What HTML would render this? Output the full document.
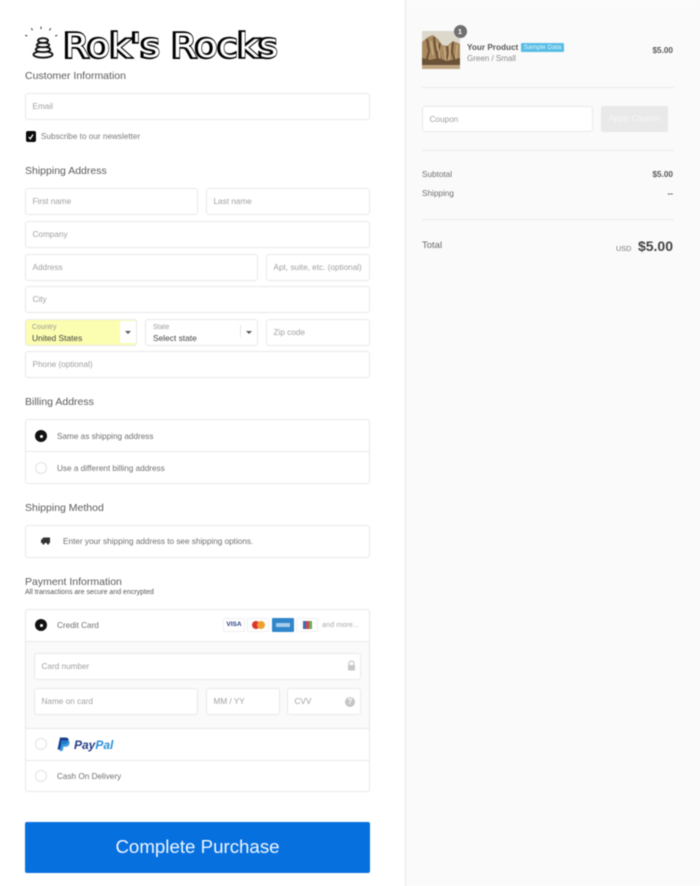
<!DOCTYPE html>
<html><head><meta charset="utf-8"><title>Checkout</title>
<style>
html,body{margin:0;padding:0;background:#fff}
#p{position:relative;width:700px;height:886px;overflow:hidden;background:#fff;font-family:"Liberation Sans",sans-serif;color:#545454;filter:blur(.5px)}
#p div{position:absolute;box-sizing:border-box}
.r{position:absolute;left:405px;top:0;width:295px;height:886px;background:#fafafa;border-left:1px solid #e6e6e6}
.i{background:#fff;border:1px solid #e9e9e9;border-radius:3px;font-size:8.2px;color:#a0a0a0;padding:0 0 1px 6.500px;display:flex;align-items:center;white-space:nowrap}
.h{font-size:10.500px;color:#5c5c5c;line-height:13px;white-space:nowrap}
.t{font-size:8.2px;line-height:11px;white-space:nowrap;color:#707070}
.box{background:#fff;border:1px solid #e8e8e8;border-radius:3px}
.ln{height:1px;background:#ebebeb}
.rad{width:12px;height:12px;border-radius:50%;border:1px solid #e2e2e2;background:#fff}
.on{background:#111;border:none}
.on:after{content:"";position:absolute;left:4.5px;top:4.5px;width:3px;height:3px;border-radius:50%;background:#fff}
.cd{width:22px;height:14px;background:#fff;border:1px solid #f0f0f0;border-radius:2px}
</style></head><body><div id="p">

<svg style="position:absolute;left:20px;top:20px" width="265" height="45" viewBox="0 0 265 45">
<g stroke="#333" stroke-width="1" fill="none" stroke-linecap="round">
<path d="M5.500 15.500l1.500.4M11.500 8.500l.8 1.400M21 7v1.800M30.500 8.500l-.8 1.500M37 15.500l-1.500.4"/>
</g>
<g fill="#fff" stroke="#111" stroke-width="1.900">
<ellipse cx="23" cy="34.500" rx="9.500" ry="3.200"/>
<ellipse cx="23" cy="29.500" rx="7.200" ry="2.600"/>
<ellipse cx="23" cy="25" rx="6.200" ry="2.300"/>
<ellipse cx="23" cy="20.500" rx="5" ry="2.300"/>
</g>
<text x="44" y="37" font-family="'DejaVu Sans',sans-serif" font-size="33" textLength="214" lengthAdjust="spacingAndGlyphs" fill="#000" stroke="#000" stroke-width="3.400" transform="translate(-.8 0)">Rok's Rocks</text>
<text x="44" y="37" font-family="'DejaVu Sans',sans-serif" font-size="33" textLength="214" lengthAdjust="spacingAndGlyphs" fill="#fff" transform="translate(.4 0)">Rok's Rocks</text>
</svg>

<div class="h" style="left:25px;top:70px">Customer Information</div>
<div class="i" style="left:25px;top:93px;width:345px;height:27px">Email</div>
<div style="left:26px;top:131px;width:10px;height:11px;background:#0a0a0a;border-radius:2px"></div>
<svg style="position:absolute;left:26px;top:131px" width="10" height="11"><path d="M2.800 6l1.500 1.800L7 3.500" stroke="#fff" stroke-width="1.200" fill="none"/></svg>
<div class="t" style="left:41px;top:131px;color:#7c7c7c">Subscribe to our newsletter</div>

<div class="h" style="left:25px;top:165px">Shipping Address</div>
<div class="i" style="left:25px;top:188px;width:173px;height:27px">First name</div>
<div class="i" style="left:206px;top:188px;width:164px;height:27px">Last name</div>
<div class="i" style="left:25px;top:221px;width:345px;height:27px">Company</div>
<div class="i" style="left:25px;top:254px;width:233px;height:27px">Address</div>
<div class="i" style="left:266px;top:254px;width:104px;height:27px">Apt, suite, etc. (optional)</div>
<div class="i" style="left:25px;top:286px;width:345px;height:27px">City</div>

<div class="i" style="left:25px;top:319px;width:112px;height:27px;background:#fbfdb0"></div>
<div style="left:120px;top:321px;width:16px;height:22px;background:#fff"></div>
<div style="left:125px;top:331px;width:0;height:0;border:3px solid transparent;border-top:3px solid #555"></div>
<div style="left:32px;top:323px;font-size:7px;line-height:10px;color:#999">Country</div>
<div style="left:32px;top:333px;font-size:8.400px;line-height:11px;color:#444;white-space:nowrap">United States</div>

<div class="i" style="left:145px;top:319px;width:113px;height:27px"></div>
<div style="left:240px;top:325px;width:1px;height:12px;background:#e6e6e6"></div>
<div style="left:246px;top:331px;width:0;height:0;border:3px solid transparent;border-top:3px solid #555"></div>
<div style="left:153px;top:323px;font-size:7px;line-height:10px;color:#999">State</div>
<div style="left:153px;top:333px;font-size:8.400px;line-height:11px;color:#444;white-space:nowrap">Select state</div>

<div class="i" style="left:266px;top:319px;width:104px;height:27px">Zip code</div>
<div class="i" style="left:25px;top:351px;width:345px;height:27px">Phone (optional)</div>

<div class="h" style="left:25px;top:396px">Billing Address</div>
<div class="box" style="left:25px;top:419px;width:345px;height:65px"></div>
<div class="ln" style="left:26px;top:451px;width:343px"></div>
<div class="rad on" style="left:35px;top:430px"></div>
<div class="t" style="left:57px;top:431px">Same as shipping address</div>
<div class="rad" style="left:35px;top:462px"></div>
<div class="t" style="left:57px;top:463px">Use a different billing address</div>

<div class="h" style="left:25px;top:502px">Shipping Method</div>
<div class="box" style="left:25px;top:525px;width:345px;height:33px"></div>
<svg style="position:absolute;left:41px;top:537px" width="9" height="8"><path d="M2.500 0.500H9V6H0V3z" fill="#333"/><circle cx="2.500" cy="6.500" r="1.100" fill="#333"/><circle cx="7" cy="6.500" r="1.100" fill="#333"/></svg>
<div class="t" style="left:63px;top:536px">Enter your shipping address to see shipping options.</div>

<div class="h" style="left:25px;top:576px">Payment Information</div>
<div style="left:25px;top:588px;font-size:7px;line-height:10px;color:#555;white-space:nowrap">All transactions are secure and encrypted</div>

<div class="box" style="left:25px;top:609px;width:345px;height:183px"></div>
<div style="left:26px;top:641px;width:343px;height:88px;background:#fafafa;border-top:1px solid #e9e9e9;border-bottom:1px solid #e9e9e9"></div>
<div class="ln" style="left:26px;top:760px;width:343px"></div>
<div class="rad on" style="left:35px;top:619px"></div>
<div class="t" style="left:57px;top:620px">Credit Card</div>

<div class="cd" style="left:223px;top:618px"></div>
<div style="left:223px;top:620px;width:22px;text-align:center;font-size:6.500px;line-height:10px;font-weight:bold;color:#2a3f80">VISA</div>
<div class="cd" style="left:247px;top:618px"></div>
<div style="left:252px;top:621px;width:8px;height:8px;border-radius:50%;background:#d9372c"></div>
<div style="left:257px;top:621px;width:8px;height:8px;border-radius:50%;background:#f0a030"></div>
<div style="left:272px;top:618px;width:22px;height:14px;background:#2f86cb;border-radius:1px"></div>
<div style="left:276px;top:623px;width:14px;height:4px;background:#a5cdea"></div>
<div class="cd" style="left:296px;top:618px"></div>
<div style="left:303px;top:621px;width:3px;height:8px;background:#3a6fb5"></div>
<div style="left:306px;top:621px;width:3px;height:8px;background:#d8434e"></div>
<div style="left:309px;top:621px;width:3px;height:8px;background:#66ad5b"></div>
<div style="left:322px;top:619px;font-size:7.300px;line-height:11px;color:#aaa;white-space:nowrap">and more...</div>

<div class="i" style="left:34px;top:653px;width:327px;height:27px">Card number</div>
<svg style="position:absolute;left:347px;top:660px" width="9" height="11"><path d="M2 5V3.500a2.500 2.500 0 015 0V5" fill="none" stroke="#c8c8c8" stroke-width="1.200"/><rect x="1" y="5" width="7" height="5.500" fill="#c8c8c8" rx=".5"/></svg>
<div class="i" style="left:34px;top:688px;width:164px;height:27px">Name on card</div>
<div class="i" style="left:206px;top:688px;width:74px;height:27px">MM / YY</div>
<div class="i" style="left:287px;top:688px;width:74px;height:27px">CVV</div>
<div style="left:345px;top:697px;width:10px;height:10px;border-radius:50%;background:#c4c4c4;color:#fff;font-size:8px;line-height:10px;font-weight:bold;text-align:center">?</div>

<div class="rad" style="left:35px;top:738px"></div>
<svg style="position:absolute;left:57px;top:737px" width="13" height="15"><path d="M3 0.500h5.500c2.500 0 3.500 1.500 3 3.500-.6 2.500-2.500 3.500-5 3.500H5L4 12.500H0.500z" fill="#1a3f8f"/><path d="M4.500 3.500h5.500c2.200 0 3 1.300 2.500 3.200-.6 2.300-2.300 3-4.500 3H6.500L5.700 14H2.500z" fill="#1f8bd6" opacity=".85"/></svg>
<div style="left:74px;top:738px;font-size:12px;line-height:14px;font-weight:bold;font-style:italic;color:#233d85;white-space:nowrap">Pay<span style="color:#2a8fd8">Pal</span></div>
<div class="rad" style="left:35px;top:770px"></div>
<div class="t" style="left:57px;top:771px">Cash On Delivery</div>

<div style="left:25px;top:822px;width:345px;height:51px;background:#0670df;border-radius:2px;color:#f0f6fe;font-size:18.700px;line-height:50px;text-align:center">Complete Purchase</div>

<div class="r"></div>
<svg style="position:absolute;left:422px;top:31px" width="38" height="38" viewBox="0 0 38 38">
<rect width="38" height="38" fill="#dcd8cc" rx="1"/>
<path d="M0 11L6 6l5-2 5 4 4 6 5 1 6-5 7 3v25H0z" fill="#a98a60"/>
<path d="M5 8l2 12-3 12M12 6l1 10 3 14M18 12l-2 9 4 11M25 15l1 8-3 9M31 11l-1 10 3 10" stroke="#6e5236" stroke-width="2" fill="none"/>
<path d="M9 10l2 14M15 12l3 16M22 16l2 14M28 14l-1 15M35 14l-1 16" stroke="#c8ab82" stroke-width="1.500" fill="none"/>
<path d="M0 27l8 2 8-2 9 3 13-3v7H0z" fill="#6a5238"/>
<path d="M0 34h38v4H0z" fill="#bfa682"/>
</svg>
<div style="left:453.500px;top:24.500px;width:13px;height:13px;border-radius:50%;background:#6f6f6f;color:#fff;font-size:7.500px;font-weight:bold;line-height:13px;text-align:center">1</div>
<div class="t" style="left:467px;top:42px;font-weight:bold;color:#5a5a5a">Your Product</div>
<div style="left:521px;top:43px;width:43px;height:9px;background:#58bde6;border-radius:1px;color:#e2f5fc;font-size:6.500px;line-height:9px;text-align:center;white-space:nowrap">Sample Data</div>
<div class="t" style="left:467px;top:53px;color:#8a8a8a;font-size:8px">Green / Small</div>
<div class="t" style="right:27px;top:45px;font-weight:bold;color:#5a5a5a">$5.00</div>
<div class="ln" style="left:422px;top:87px;width:252px"></div>
<div class="i" style="left:422px;top:106px;width:171px;height:26px;padding-bottom:0">Coupon</div>
<div style="left:601px;top:106px;width:67px;height:26px;background:#e9e9e9;border-radius:2px;color:#f7f7f7;font-size:8.200px;line-height:26px;text-align:center;white-space:nowrap">Apply Coupon</div>
<div class="ln" style="left:422px;top:150px;width:252px"></div>
<div class="t" style="left:422px;top:169px">Subtotal</div>
<div class="t" style="right:27px;top:169px;font-weight:bold;color:#5a5a5a">$5.00</div>
<div class="t" style="left:422px;top:188px">Shipping</div>
<div class="t" style="right:27px;top:188px;font-weight:bold;color:#5a5a5a">--</div>
<div class="ln" style="left:422px;top:219px;width:252px"></div>
<div style="left:422px;top:240px;font-size:9.500px;line-height:12px;color:#6a6a6a">Total</div>
<div style="left:616px;top:243px;font-size:7.300px;line-height:11px;color:#777">USD</div>
<div style="right:27px;top:238px;font-size:14px;line-height:17px;font-weight:bold;color:#444">$5.00</div>
</div></body></html>
